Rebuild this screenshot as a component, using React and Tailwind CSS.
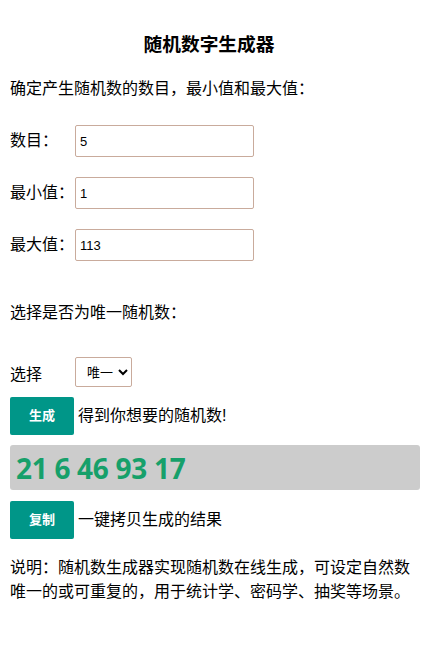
const fields = [
  { id: 'count', label: '数目：', value: '5' },
  { id: 'min', label: '最小值：', value: '1' },
  { id: 'max', label: '最大值：', value: '113' },
]

const cjk = "font-['Liberation_Sans','Noto_Sans_CJK_SC',sans-serif]"

function Btn({ children }) {
  return (
    <button className="w-[64px] h-[38px] shrink-0 rounded-[2px] bg-[#009688] text-white text-[13px] font-bold">
      {children}
    </button>
  )
}

export default function App() {
  return (
    <div className={`${cjk} text-black text-[16px] pl-[10px] pr-[2px] pt-[33px] pb-[40px]`}>
      <h1 className="text-center text-[18.72px] font-bold leading-[24px] pr-[12px]">随机数字生成器</h1>

      <p className="mt-[20px] leading-[24px]">确定产生随机数的数目，最小值和最大值：</p>

      <div className="mt-[24px] flex flex-col gap-[20px]">
        {fields.map(f => (
          <div key={f.id} className="flex items-center">
            <label className="w-[65px] shrink-0">{f.label}</label>
            <input
              defaultValue={f.value}
              className="w-[179px] h-[32px] px-[4px] rounded-[2px] border border-[#c9ab9c] text-[13px] font-['Liberation_Sans',sans-serif] outline-none"
            />
          </div>
        ))}
      </div>

      <p className="mt-[40px] leading-[24px]">选择是否为唯一随机数：</p>

      <div className="mt-[32px] flex items-center">
        <label className="w-[65px] shrink-0 leading-[24px] pt-[6px]">选择</label>
        <select className="w-[57px] h-[30px] pl-[7px] rounded-[2px] border border-[#c9ab9c] text-[13px] bg-white">
          <option>唯一</option>
          <option>可重复</option>
        </select>
      </div>

      <div className="mt-[10px] flex items-center gap-[4px]">
        <Btn>生成</Btn>
        <span>得到你想要的随机数!</span>
      </div>

      <div className="mt-[10px] w-[410px] h-[45px] rounded-[3px] bg-[#cccccc] flex items-center pl-[6px]">
        <span className="font-['Noto_Sans',sans-serif] font-bold text-[28px] text-[#16a06a] tracking-[-0.3px]">21 6 46 93 17</span>
      </div>

      <div className="mt-[11px] flex items-center gap-[4px]">
        <Btn>复制</Btn>
        <span>一键拷贝生成的结果</span>
      </div>

      <p className="mt-[17px] leading-[24px]">
        说明：随机数生成器实现随机数在线生成，可设定自然数唯一的或可重复的，用于统计学、密码学、抽奖等场景。
      </p>
    </div>
  )
}
